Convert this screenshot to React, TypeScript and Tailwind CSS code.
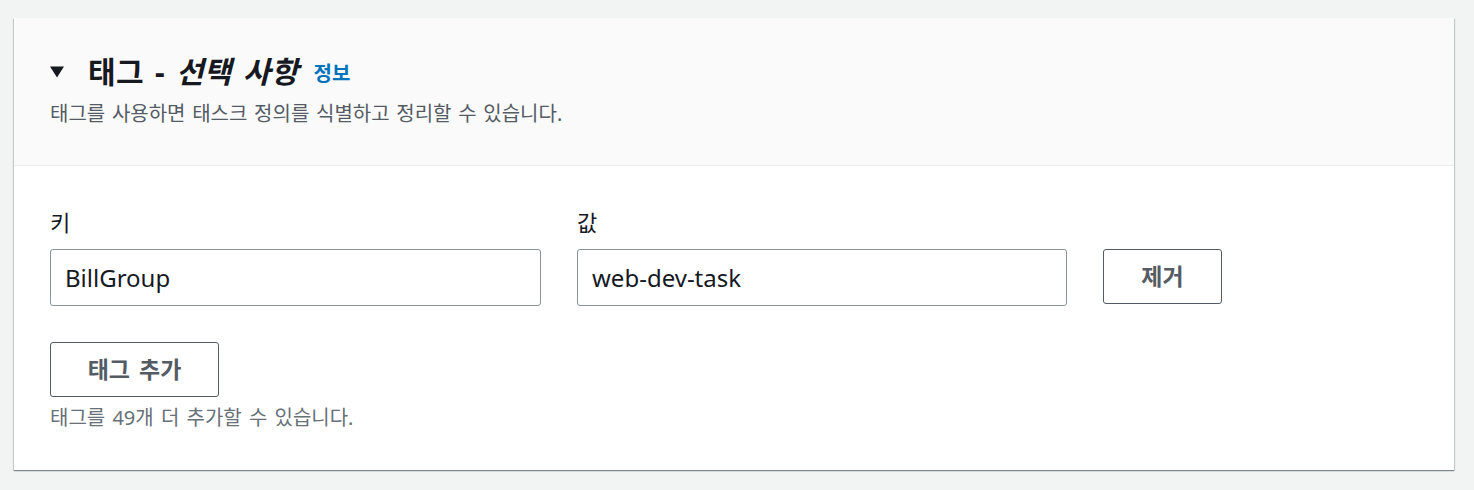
export default function App() {
  return (
    <div
      className="min-h-[490px] bg-[#f2f3f3] pt-[18px] pr-[20px] pb-[20px] pl-[14px]"
      style={{ fontFamily: '"Noto Sans", "Noto Sans CJK KR", sans-serif' }}
    >
      <section className="bg-white shadow-[0_1px_1px_0_rgba(0,28,36,0.3),1px_1px_1px_0_rgba(0,28,36,0.15),-1px_1px_1px_0_rgba(0,28,36,0.15)]">
        <header className="h-[148px] border-b border-[#eaeded] bg-[#fafafa] pl-[36px] pt-[36px]">
          <div className="flex items-center">
            <svg width="14" height="12" viewBox="0 0 14 12" className="mr-[24px]">
              <polygon points="0,0.5 14,0.5 7,11.5" fill="#16191f" />
            </svg>
            <h2 className="text-[30px] font-bold leading-[36px] tracking-[0.3px] text-[#16191f] [word-spacing:3px]">
              태그 - <i>선택 사항</i>
            </h2>
            <a className="ml-[15px] mt-[4px] text-[20px] font-bold leading-[28px] text-[#0073bb]">정보</a>
          </div>
          <p className="mt-[10px] text-[20px] leading-[28px] text-[#545b64] [word-spacing:1.5px]">
            태그를 사용하면 태스크 정의를 식별하고 정리할 수 있습니다.
          </p>
        </header>

        <div className="px-[36px] pt-[41px] pb-[38px]">
          <div className="flex items-end gap-[36px]">
            <label className="w-[491px]">
              <span className="block text-[22px] leading-[30px] text-[#16191f]">키</span>
              <div className="mt-[12px] flex h-[57px] items-center rounded-[3px] border border-[#879596] px-[14px] text-[24px] text-[#16191f]">
                BillGroup
              </div>
            </label>
            <label className="w-[490px]">
              <span className="block text-[22px] leading-[30px] text-[#16191f]">값</span>
              <div className="mt-[12px] flex h-[57px] items-center rounded-[3px] border border-[#879596] px-[14px] text-[24px] text-[#16191f]">
                web-dev-task
              </div>
            </label>
            <button className="mb-[2px] flex h-[55px] w-[119px] items-center justify-center rounded-[3px] border border-[#545b64] bg-white text-[23px] font-bold text-[#545b64]">
              제거
            </button>
          </div>

          <button className="mt-[36px] flex h-[55px] w-[169px] items-center justify-center rounded-[3px] border border-[#545b64] bg-white text-[23px] font-bold text-[#545b64] [word-spacing:3px]">
            태그 추가
          </button>
          <p className="mt-[7px] text-[20px] leading-[28px] text-[#687078] [word-spacing:2px]">
            태그를 49개 더 추가할 수 있습니다.
          </p>
        </div>
      </section>
    </div>
  );
}
